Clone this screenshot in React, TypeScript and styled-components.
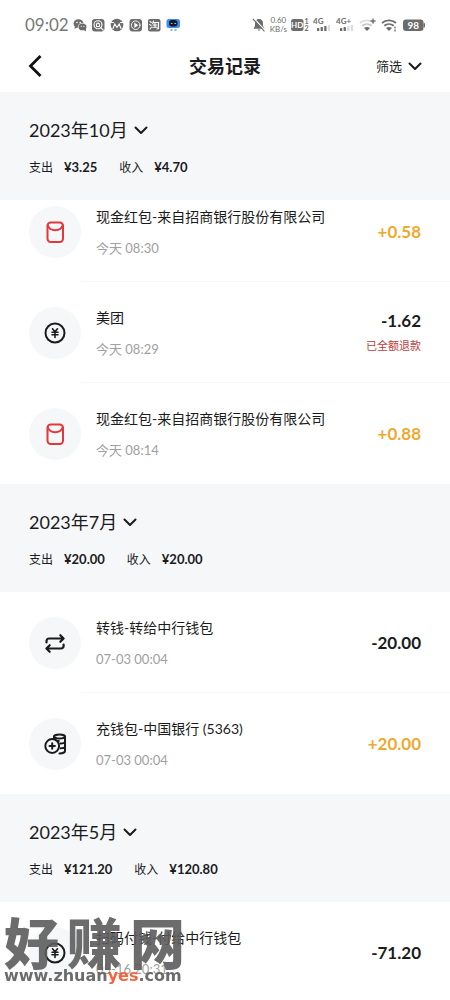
import React from "react";
import styled, { createGlobalStyle } from "styled-components";

const GlobalStyle = createGlobalStyle`
  * { box-sizing: border-box; }
  body {
    margin: 0;
    background: #fff;
    color: #1b1b1d;
    font-family: Lato, "Noto Sans CJK SC", sans-serif;
  }
  button {
    font: inherit;
    color: inherit;
    background: none;
    border: 0;
    padding: 0;
    cursor: pointer;
  }
`;

const Screen = styled.div`
  position: relative;
  display: flex;
  flex-direction: column;
  height: 100vh;
  overflow: hidden;
`;

const StatusBar = styled.div`
  display: flex;
  align-items: center;
  justify-content: space-between;
  height: 48px;
  padding: 2px 25px 0;
  color: #6c6c6c;
  flex: none;
`;

const StatusGroup = styled.div`
  display: flex;
  align-items: center;
  gap: 4px;
  svg { display: block; }
`;

const Clock = styled.time`
  font-size: 17px;
  line-height: 20px;
  color: #777;
`;

const Speed = styled.span`
  font-size: 8px;
  line-height: 9px;
  text-align: center;
`;

const NavBar = styled.header`
  display: grid;
  grid-template-columns: 1fr auto 1fr;
  align-items: center;
  height: 44px;
  padding: 0 28px 8px;
  flex: none;
`;

const BackButton = styled.button`
  justify-self: start;
  display: flex;
`;

const PageTitle = styled.h1`
  margin: 0;
  font-size: 18px;
  line-height: 24px;
  font-weight: 700;
`;

const FilterButton = styled.button`
  justify-self: end;
  display: flex;
  align-items: center;
  gap: 6px;
  font-size: 13px;
  line-height: 20px;
`;

const Records = styled.main`
  flex: 1;
  min-height: 0;
  overflow-y: auto;
  scrollbar-width: none;
`;

const MonthHeader = styled.div`
  position: sticky;
  top: 0;
  z-index: 1;
  display: flex;
  flex-direction: column;
  align-items: flex-start;
  gap: 16px;
  padding: 26px 29px 22px;
  background: #f6f7f9;
`;

const MonthHeading = styled.h2`
  margin: 0;
  font-size: 18px;
  line-height: 24px;
  font-weight: 400;
`;

const MonthButton = styled.button`
  display: flex;
  align-items: center;
  gap: 6px;
`;

const Totals = styled.dl`
  display: flex;
  gap: 22px;
  margin: 0;
  line-height: 20px;
`;

const Total = styled.div`
  display: flex;
  gap: 11px;
  dt { font-size: 12px; }
  dd { margin: 0; font-size: 13px; font-weight: 700; line-height: 18px; }
`;

const Rows = styled.ul<{ $scrolled?: boolean }>`
  list-style: none;
  margin: ${(p) => (p.$scrolled ? "-19px" : "0")} 0 0;
  padding: 0;
`;

const Row = styled.li`
  display: flex;
  align-items: center;
  height: 101px;
  padding-left: 29px;
`;

const IconDisc = styled.span`
  display: flex;
  align-items: center;
  justify-content: center;
  width: 52px;
  height: 52px;
  border-radius: 50%;
  background: #f6f7f9;
  flex: none;
`;

const RowBody = styled.div`
  flex: 1;
  display: flex;
  align-items: center;
  justify-content: space-between;
  height: 100%;
  padding: 2px 29px 0 15px;
  border-bottom: 1px solid #f8f8f9;
  ${Row}:last-child & { border-bottom-color: transparent; }
`;

const Details = styled.div`
  display: flex;
  flex-direction: column;
  gap: 11px;
`;

const Title = styled.span`
  font-size: 14px;
  line-height: 20px;
`;

const When = styled.span`
  font-size: 13px;
  line-height: 20px;
  color: #a0a0a2;
`;

const Amounts = styled.div`
  display: flex;
  flex-direction: column;
  align-items: flex-end;
  gap: 4px;
`;

const Amount = styled.span<{ $income?: boolean }>`
  font-size: 17px;
  line-height: 22px;
  font-weight: 700;
  color: ${(p) => (p.$income ? "#f0a930" : "#1b1b1d")};
`;

const Refund = styled.span`
  font-size: 11px;
  line-height: 20px;
  color: #b8403f;
`;

const Watermark = styled.div`
  position: absolute;
  left: 4px;
  bottom: 15px;
  z-index: 2;
  color: #5c5c5c;
  opacity: 0.9;
  pointer-events: none;
`;

const WatermarkName = styled.div`
  display: flex;
  gap: 8px;
  font-size: 55px;
  line-height: 48px;
  font-weight: 900;
`;

const WatermarkSite = styled.div`
  font-family: "DejaVu Sans", sans-serif;
  font-size: 16px;
  line-height: 18px;
  font-weight: 700;
  em { font-style: normal; color: #f4532c; }
`;

const Chevron = () => (
  <svg width="14" height="14" viewBox="0 0 14 14" fill="none" stroke="#1b1b1d" strokeWidth="2" strokeLinecap="round" strokeLinejoin="round" aria-hidden="true">
    <path d="M1.500 4.500 7 10l5.500-5.500" />
  </svg>
);

type IconKind = "packet" | "yen" | "transfer" | "topup";

const RowIcon = ({ kind }: { kind: IconKind }) => {
  const common = {
    width: 24,
    height: 24,
    viewBox: "0 0 24 24",
    fill: "none",
    strokeWidth: 2,
    strokeLinecap: "round" as const,
    strokeLinejoin: "round" as const,
    "aria-hidden": true,
  };
  if (kind === "packet")
    return (
      <svg {...common} stroke="#e0383c">
        <rect x="4.500" y="2.500" width="15.500" height="19.500" rx="3.200" />
        <path d="M4.800 5.500c1 3 4 4.700 7.400 4.700s6.400-1.700 7.400-4.700" />
      </svg>
    );
  if (kind === "yen")
    return (
      <svg {...common} stroke="#1b1b1d">
        <circle cx="12" cy="12" r="9.500" />
        <path d="m9.500 7.800 2.500 3 2.500-3M12 11v5.500M9 11.300h6M9 13.700h6" strokeWidth="1.600" />
      </svg>
    );
  if (kind === "transfer")
    return (
      <svg {...common} stroke="#1b1b1d" strokeWidth={2.2}>
        <path d="M3.500 11.500V10a2.500 2.500 0 0 1 2.500-2.500H20.500M17.300 4.200 20.600 7.500 17.300 10.800M20.600 13.500v1.500a2.500 2.500 0 0 1-2.500 2.500H3.500M6.700 14.200 3.400 17.500 6.700 20.800" />
      </svg>
    );
  return (
    <svg {...common} stroke="#1b1b1d">
      <ellipse cx="16.500" cy="4.600" rx="5.500" ry="2" />
      <path d="M22 4.600v14.500c0 1.300-2.500 2.400-5.500 2.400M11 4.600v2.600M22 9.500c0 1.200-2.200 2-4.800 2M22 14.300c0 1.200-1.800 2-4.300 2M11 7.200c1.300 1.300 3 1.800 4.800 1.800" />
      <circle cx="9.200" cy="14" r="6.900" fill="#f6f7f9" />
      <path d="M9.200 11.300v5.400M6.500 14h5.400" />
    </svg>
  );
};

const AppIcons = () => (
  <svg width="108" height="14" viewBox="0 0 108 14" aria-hidden="true">
    <g fill="#6c6c6c">
      <ellipse cx="5.500" cy="5.500" rx="5" ry="4.300" />
      <path d="m2 8-.5 3L5 9z" />
      <ellipse cx="9.500" cy="9" rx="4.300" ry="3.700" stroke="#fff" strokeWidth=".7" />
      <path d="m11 12 2 1.500V10z" />
      <rect x="19" y="1" width="12.500" height="12.500" rx="3" />
      <circle cx="44" cy="7" r="6.300" />
      <rect x="56.500" y="1" width="12.500" height="12.500" rx="3" />
      <rect x="75" y="1" width="12.500" height="12.500" rx="2" />
    </g>
    <g fill="#fff">
      <circle cx="4" cy="4.500" r=".8" />
      <circle cx="7.200" cy="4.500" r=".8" />
      <circle cx="8.300" cy="8.300" r=".6" />
      <circle cx="11" cy="8.300" r=".6" />
      <path d="m61.300 4.500 4 2.700-4 2.700z" />
    </g>
    <g fill="none" stroke="#fff" strokeWidth="1.100" strokeLinecap="round">
      <circle cx="25" cy="6.800" r="4" />
      <path d="m28 9.800 2.300 2.300M23.500 8.500V6l1.500-1 1.500 1v2.500z" />
      <path d="M40 10.500 41.800 6l2.200 3.500L46.200 6 48 10.500M38 4.500h2.500M47.500 4.500H50" />
      <circle cx="62.700" cy="7.200" r="4.300" strokeWidth=".9" />
      <path d="m77 3.500 1.300 1M76.700 6.500l1.300.8M77 11l1.500-2M80.500 3l-.8 2.500M80 4.500h5.500v6l-1.500.5M80 7h4M79.700 9.300h4.500M82 5v4.300" />
    </g>
    <rect x="93.500" y="1" width="13.500" height="9" rx="2.500" fill="#3d8de6" />
    <rect x="96" y="2" width="8.500" height="6.500" rx="3" fill="#12182b" />
    <path d="M98 5.500h1.500M101.500 5.500H103" stroke="#7fd0ff" />
    <path d="M97.500 12h2M101.500 12h2" stroke="#7fb9f5" strokeWidth="2" />
  </svg>
);

const BellOff = () => (
  <svg width="14" height="14" viewBox="0 0 14 14" aria-hidden="true">
    <path d="M7 1c2.600 0 4 1.900 4 4.300V8l1.500 2.700H1.500L3 8V5.300C3 2.900 4.400 1 7 1zM5.500 11.500h3L7 13z" fill="#6c6c6c" />
    <path d="m2 .5 11 12" stroke="#fff" strokeWidth="1.200" />
    <path d="m1 1 11.500 12.300" stroke="#6c6c6c" strokeWidth="1.100" />
  </svg>
);

const HdBadge = () => (
  <svg width="18" height="16" viewBox="0 0 18 16" fontFamily="Lato, sans-serif" fontWeight="700" aria-hidden="true">
    <rect x="0" y="2" width="12.500" height="12" rx="2.500" fill="#6c6c6c" />
    <text x="6.200" y="11" fontSize="8" textAnchor="middle" fill="#fff">HD</text>
    <text x="13.500" y="7" fontSize="7" fill="#6c6c6c">1</text>
    <text x="13.500" y="14" fontSize="7" fill="#6c6c6c">2</text>
  </svg>
);

const Signal = ({ label, bars }: { label: string; bars: number }) => (
  <svg width="19" height="18" viewBox="0 0 19 18" fontFamily="Lato, sans-serif" fontWeight="700" aria-hidden="true">
    {[0, 1, 2, 3].map((i) => (
      <rect key={i} x={4 + i * 3.6} y={12 - i} width="2.300" height={3 + i} rx=".6" fill={i < bars ? "#6c6c6c" : "#dcdcdc"} />
    ))}
    <text x="0" y="8" fontSize="8" fill="#6c6c6c">{label}</text>
  </svg>
);

const Wifi = ({ weak }: { weak?: boolean }) => (
  <svg width="18" height="14" viewBox="0 0 18 14" fill="none" stroke="#6c6c6c" strokeWidth="1.800" aria-hidden="true">
    <path d="M1 5c4-3.500 10-3.500 14 0" stroke={weak ? "#dcdcdc" : "#6c6c6c"} />
    <path d="M3.300 7.800c2.700-2.300 6.700-2.300 9.400 0" stroke={weak ? "#c5c5c5" : "#6c6c6c"} />
    <path d="M8 13 5 10c1.700-1.400 4.300-1.400 6 0z" fill="#6c6c6c" stroke="none" />
    {weak ? <path d="M14 .5v5M11.500 3h5" strokeWidth="1.300" /> : <path d="M14 8.500v2M14 11.500v2" strokeWidth="1.300" />}
  </svg>
);

const Battery = () => (
  <svg width="22" height="14" viewBox="0 0 22 14" aria-hidden="true">
    <rect x="0" y="1.500" width="20.500" height="11.500" rx="3" fill="#6c6c6c" />
    <rect x="20.500" y="5" width="1.500" height="4.500" rx=".7" fill="#6c6c6c" />
    <text x="10.300" y="11" fontSize="10" textAnchor="middle" fill="#fff" fontWeight="700" fontFamily="Lato, sans-serif">98</text>
  </svg>
);

interface Entry {
  icon: IconKind;
  title: string;
  when: string;
  amount: string;
  refund?: string;
}

interface Month {
  name: string;
  spent: string;
  earned: string;
  entries: Entry[];
}

const months: Month[] = [
  {
    name: "2023年10月",
    spent: "¥3.25",
    earned: "¥4.70",
    entries: [
      { icon: "packet", title: "现金红包-来自招商银行股份有限公司", when: "今天 08:30", amount: "+0.58" },
      { icon: "yen", title: "美团", when: "今天 08:29", amount: "-1.62", refund: "已全额退款" },
      { icon: "packet", title: "现金红包-来自招商银行股份有限公司", when: "今天 08:14", amount: "+0.88" },
    ],
  },
  {
    name: "2023年7月",
    spent: "¥20.00",
    earned: "¥20.00",
    entries: [
      { icon: "transfer", title: "转钱-转给中行钱包", when: "07-03 00:04", amount: "-20.00" },
      { icon: "topup", title: "充钱包-中国银行 (5363)", when: "07-03 00:04", amount: "+20.00" },
    ],
  },
  {
    name: "2023年5月",
    spent: "¥121.20",
    earned: "¥120.80",
    entries: [{ icon: "yen", title: "扫码付钱-付给中行钱包", when: "05-16 20:31", amount: "-71.20" }],
  },
];

export default function App() {
  return (
    <Screen>
      <GlobalStyle />
      <StatusBar>
        <StatusGroup>
          <Clock>09:02</Clock>
          <AppIcons />
        </StatusGroup>
        <StatusGroup>
          <BellOff />
          <Speed>0.60<br />KB/s</Speed>
          <HdBadge />
          <Signal label="4G" bars={3} />
          <Signal label="4G+" bars={2} />
          <Wifi weak />
          <Wifi />
          <Battery />
        </StatusGroup>
      </StatusBar>
      <NavBar>
        <BackButton aria-label="返回">
          <svg width="14" height="24" viewBox="0 0 14 24" fill="none" stroke="#111" strokeWidth="2.800" aria-hidden="true">
            <path d="M12.500 2 2.500 12l10 10" />
          </svg>
        </BackButton>
        <PageTitle>交易记录</PageTitle>
        <FilterButton>
          筛选
          <Chevron />
        </FilterButton>
      </NavBar>
      <Records>
        {months.map((month, index) => (
          <section key={month.name}>
            <MonthHeader>
              <MonthHeading>
                <MonthButton>
                  {month.name}
                  <Chevron />
                </MonthButton>
              </MonthHeading>
              <Totals>
                <Total><dt>支出</dt><dd>{month.spent}</dd></Total>
                <Total><dt>收入</dt><dd>{month.earned}</dd></Total>
              </Totals>
            </MonthHeader>
            <Rows $scrolled={index === 0}>
              {month.entries.map((entry) => (
                <Row key={entry.title + entry.when}>
                  <IconDisc><RowIcon kind={entry.icon} /></IconDisc>
                  <RowBody>
                    <Details>
                      <Title>{entry.title}</Title>
                      <When>{entry.when}</When>
                    </Details>
                    <Amounts>
                      <Amount $income={entry.amount.startsWith("+")}>{entry.amount}</Amount>
                      {entry.refund && <Refund>{entry.refund}</Refund>}
                    </Amounts>
                  </RowBody>
                </Row>
              ))}
            </Rows>
          </section>
        ))}
      </Records>
      <Watermark>
        <WatermarkName><span>好</span><span>赚</span><span>网</span></WatermarkName>
        <WatermarkSite>www.zhuan<em>yes</em>.com</WatermarkSite>
      </Watermark>
    </Screen>
  );
}
